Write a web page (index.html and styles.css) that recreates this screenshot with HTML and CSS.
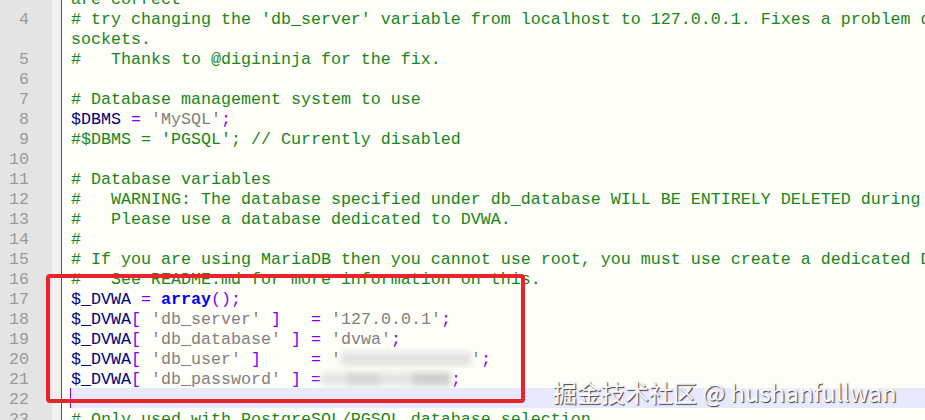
FILE: index.html
```html
<!DOCTYPE html>
<html lang="en">
<head>
<meta charset="utf-8">
<title>config.inc.php</title>
<link rel="stylesheet" href="styles.css">
</head>
<body>
<div class="stage">
  <div class="editor">
    <div class="row"><span class="ln"></span><span class="fold"></span><span class="code c">are correct</span></div>
    <div class="row"><span class="ln">4</span><span class="fold"></span><span class="code c"># try changing the 'db_server' variable from localhost to 127.0.0.1. Fixes a problem due to</span></div>
    <div class="row"><span class="ln"></span><span class="fold"></span><span class="code c">sockets.</span></div>
    <div class="row"><span class="ln">5</span><span class="fold"></span><span class="code c">#   Thanks to @digininja for the fix.</span></div>
    <div class="row"><span class="ln">6</span><span class="fold"></span><span class="code"></span></div>
    <div class="row"><span class="ln">7</span><span class="fold"></span><span class="code c"># Database management system to use</span></div>
    <div class="row"><span class="ln">8</span><span class="fold"></span><span class="code"><span class="v">$DBMS</span> <span class="o">=</span> <span class="s">'MySQL'</span><span class="o">;</span></span></div>
    <div class="row"><span class="ln">9</span><span class="fold"></span><span class="code c">#$DBMS = 'PGSQL'; // Currently disabled</span></div>
    <div class="row"><span class="ln">10</span><span class="fold"></span><span class="code"></span></div>
    <div class="row"><span class="ln">11</span><span class="fold"></span><span class="code c"># Database variables</span></div>
    <div class="row"><span class="ln">12</span><span class="fold"></span><span class="code c">#   WARNING: The database specified under db_database WILL BE ENTIRELY DELETED during setup.</span></div>
    <div class="row"><span class="ln">13</span><span class="fold"></span><span class="code c">#   Please use a database dedicated to DVWA.</span></div>
    <div class="row"><span class="ln">14</span><span class="fold"></span><span class="code c">#</span></div>
    <div class="row"><span class="ln">15</span><span class="fold"></span><span class="code c"># If you are using MariaDB then you cannot use root, you must use create a dedicated DVWA user.</span></div>
    <div class="row"><span class="ln">16</span><span class="fold"></span><span class="code c">#   See README.md for more information on this.</span></div>
    <div class="row"><span class="ln">17</span><span class="fold"></span><span class="code"><span class="v">$_DVWA</span> <span class="o">=</span> <span class="k">array</span><span class="o">();</span></span></div>
    <div class="row"><span class="ln">18</span><span class="fold"></span><span class="code"><span class="v">$_DVWA</span><span class="o">[</span> <span class="s">'db_server'</span> <span class="o">]</span>   <span class="o">=</span> <span class="s">'127.0.0.1'</span><span class="o">;</span></span></div>
    <div class="row"><span class="ln">19</span><span class="fold"></span><span class="code"><span class="v">$_DVWA</span><span class="o">[</span> <span class="s">'db_database'</span> <span class="o">]</span> <span class="o">=</span> <span class="s">'dvwa'</span><span class="o">;</span></span></div>
    <div class="row"><span class="ln">20</span><span class="fold"></span><span class="code"><span class="v">$_DVWA</span><span class="o">[</span> <span class="s">'db_user'</span> <span class="o">]</span>     <span class="o">=</span> <span class="s">'<span class="blur w13"></span>'</span><span class="o">;</span></span></div>
    <div class="row"><span class="ln">21</span><span class="fold"></span><span class="code"><span class="v">$_DVWA</span><span class="o">[</span> <span class="s">'db_password'</span> <span class="o">]</span> <span class="o">=</span><span class="blur w13 b2"></span><span class="o">;</span></span></div>
    <div class="row cur"><span class="ln">22</span><span class="fold"></span><span class="code"></span></div>
    <div class="row"><span class="ln">23</span><span class="fold"></span><span class="code c"># Only used with PostgreSQL/PGSQL database selection.</span></div>
  </div>
  <div class="mark"></div>
  <div class="watermark">掘金技术社区 @ hushanfullwan</div>
</div>
</body>
</html>
```

FILE: styles.css
```css
html, body {
  margin: 0;
  padding: 0;
  background: #fefef8;
  overflow: hidden;
}

.stage {
  position: relative;
  width: 925px;
  height: 420px;
  overflow: hidden;
}

.editor {
  margin-top: -12px;
  font-family: "Liberation Mono", "Courier New", monospace;
  font-size: 16.667px;
}

.row {
  display: flex;
  height: 20px;
  line-height: 24px;
}

.ln {
  flex: 0 0 52px;
  box-sizing: border-box;
  padding-right: 23px;
  text-align: right;
  background: #e4e4e4;
  color: #9a9a9a;
}

.fold {
  flex: 0 0 9px;
  background: #f1f1f1;
  border-right: 1px solid #d42020;
}

.code {
  flex: 1 1 auto;
  margin-left: 8px;
  padding-left: 1px;
  white-space: pre;
  overflow: hidden;
  color: #000080;
}

.cur .code {
  background: #e8e8ff;
  box-shadow: inset 1px 0 0 #8000ff;
}

.c { color: #18861c; }
.v { color: #000080; }
.o { color: #8000ff; }
.s { color: #808080; }
.k { color: #0000ff; font-weight: bold; }

.blur {
  display: inline-block;
  vertical-align: -2px;
  height: 14px;
  background: #e2e2e2;
  filter: blur(3px);
}
.w13 { width: 130px; }
.b2 {
  background: linear-gradient(90deg, #e6e6e6 0 20%, #d6d6d6 20% 45%, #e4e4e4 45% 70%, #cfcfcf 70% 100%);
}

.mark {
  position: absolute;
  left: 46px;
  top: 274px;
  width: 471px;
  height: 121px;
  border: 4px solid #e8242a;
  border-radius: 4px;
}

.watermark {
  position: absolute;
  left: 553px;
  top: 379px;
  font-family: "Noto Sans CJK SC", "Noto Sans", sans-serif;
  font-size: 24px;
  line-height: 26px;
  color: #f6f6f6;
  white-space: nowrap;
  text-shadow: 1px 1px 1px rgba(0, 0, 0, 0.75), -1px -1px 0 rgba(255, 255, 255, 0.6);
}
```
